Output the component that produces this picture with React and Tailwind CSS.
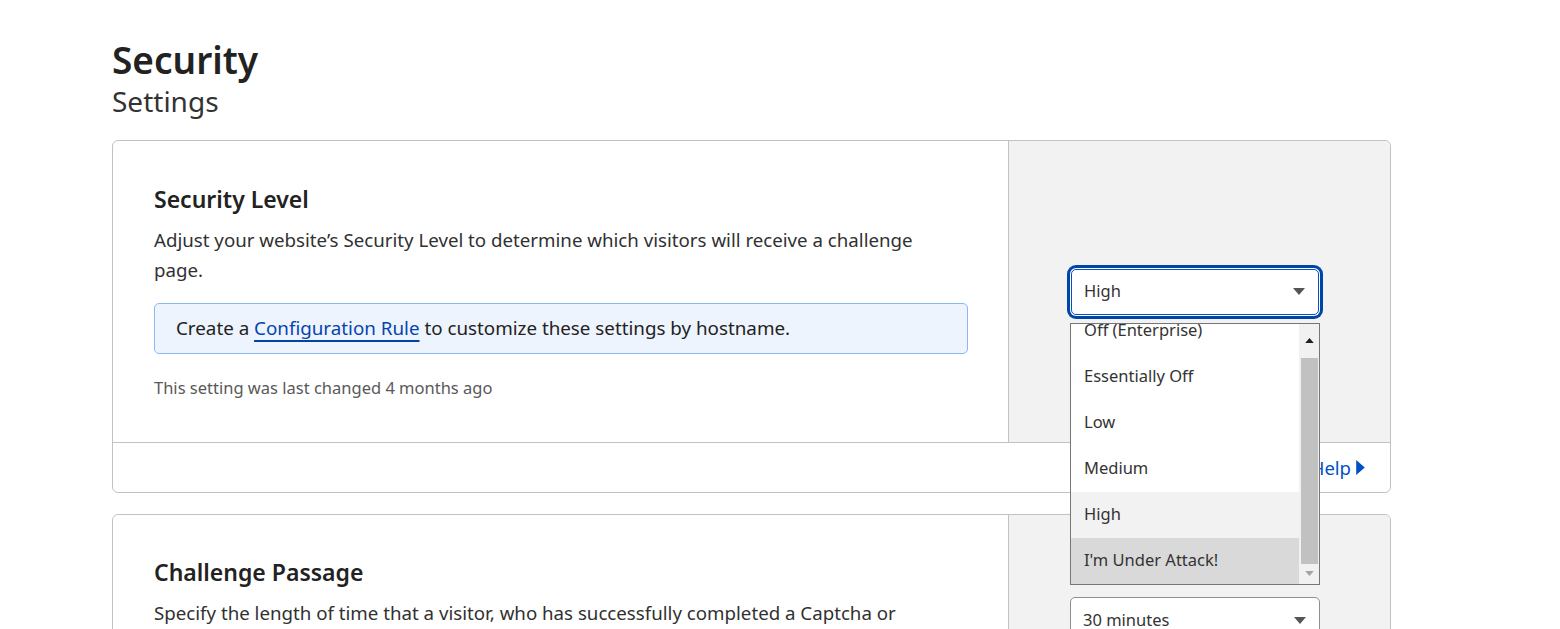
import React from 'react';

const levels = ['Off (Enterprise)', 'Essentially Off', 'Low', 'Medium', 'High', "I'm Under Attack!"];

function Caret({ className = '' }) {
  return (
    <svg viewBox="0 0 12 7" className={className} aria-hidden="true">
      <path d="M0 0h12L6 7z" fill="currentColor" />
    </svg>
  );
}

function LevelMenu() {
  return (
    <div className="absolute left-[-1px] top-[54px] z-10 flex h-[262px] w-[250px] overflow-hidden border border-[#767676] bg-white">
      <ul className="flex-1 -mt-[16px]">
        {levels.map((level) => (
          <li
            key={level}
            className={
              'flex h-[46px] items-center pl-[13px] text-[16.5px] text-[#333] ' +
              (level === 'High' ? 'bg-[#f2f2f2] ' : '') +
              (level === "I'm Under Attack!" ? 'bg-[#d9d9d9]' : '')
            }
          >
            {level}
          </li>
        ))}
      </ul>
      {/* scrollbar */}
      <div className="flex w-[20px] flex-col items-center bg-[#f1f1f1]">
        <div className="flex h-[34px] items-center justify-center text-[#202020]">
          <Caret className="h-[5px] w-[9px] rotate-180" />
        </div>
        <div className="h-[206px] w-[17px] bg-[#c1c1c1]" />
        <div className="flex flex-1 items-center justify-center text-[#a3a3a3]">
          <Caret className="h-[5px] w-[9px]" />
        </div>
      </div>
    </div>
  );
}

function Select({ value, focused, className = 'w-[248px]', children }) {
  return (
    <div className={'relative ' + className}>
      <div
        className={
          'flex h-[46px] items-center justify-between rounded-[5px] border bg-white pl-[12px] pr-[13px] text-[16.5px] text-[#333] ' +
          (focused
            ? 'border-[#0051c3] shadow-[0_0_0_1px_#ffffff,0_0_0_4px_#0045a6]'
            : 'border-[#8f8f8f]')
        }
      >
        <span>{value}</span>
        <Caret className="h-[7px] w-[12px] text-[#555]" />
      </div>
      {children}
    </div>
  );
}

export default function App() {
  return (
    <div
      className="min-h-screen bg-white px-[112px] pt-[38px] text-[#313131]"
      style={{ fontFamily: '"Noto Sans", "Open Sans", sans-serif' }}
    >
      <h1 className="text-[37px] font-semibold leading-[44px] text-[#222]">Security</h1>
      <p className="text-[28px] leading-[38px] text-[#333]">Settings</p>

      <section className="mt-[20px] w-[1279px] rounded-[6px] border border-[#c2c2c2]">
        <div className="flex">
          <div className="w-[895px] px-[41px] pt-[42px] pb-[42px]">
            <h2 className="text-[23px] font-semibold leading-[32px] text-[#222]">Security Level</h2>
            <p className="mt-[10px] w-[790px] text-[18.7px] leading-[30px]">
              Adjust your website’s Security Level to determine which visitors will receive a challenge page.
            </p>
            <div className="mt-[18px] flex h-[51px] w-[814px] items-center rounded-[5px] border border-[#8cb8f6] bg-[#edf4fe] px-[21px] text-[18.8px] text-[#222]">
              <span>
                Create a{' '}
                <a href="#" className="text-[#0645ad] underline decoration-[#0045a6] decoration-2 underline-offset-[5px]">
                  Configuration Rule
                </a>{' '}
                to customize these settings by hostname.
              </span>
            </div>
            <p className="mt-[22px] text-[16.5px] leading-[24px] text-[#595959]">
              This setting was last changed 4 months ago
            </p>
          </div>
          <div className="flex flex-1 items-center rounded-tr-[6px] border-l border-[#c2c2c2] bg-[#f2f2f2] pl-[62px]">
            <Select value="High" focused>
              <LevelMenu />
            </Select>
          </div>
        </div>
        <div className="flex h-[50px] items-center justify-end border-t border-[#c2c2c2] pr-[25px]">
          <a href="#" className="flex items-center gap-[5px] text-[18.5px] text-[#0051c3]">
            Help
            <svg viewBox="0 0 8 14" className="h-[15px] w-[9px]" aria-hidden="true">
              <path d="M0 0l8 7-8 7z" fill="currentColor" />
            </svg>
          </a>
        </div>
      </section>

      <section className="mt-[21px] w-[1279px] rounded-[6px] border border-[#c2c2c2]">
        <div className="flex">
          <div className="w-[895px] px-[41px] pt-[41px] pb-[42px]">
            <h2 className="text-[23px] font-semibold leading-[32px] text-[#222]">Challenge Passage</h2>
            <p className="mt-[10px] w-[790px] text-[18.7px] leading-[30px]">
              Specify the length of time that a visitor, who has successfully completed a Captcha or JavaScript Challenge, can access your website.
            </p>
          </div>
          <div className="flex flex-1 items-start rounded-tr-[6px] border-l border-[#c2c2c2] bg-[#f2f2f2] pl-[61px] pt-[82px]">
            <Select value="30 minutes" className="w-[250px]" />
          </div>
        </div>
      </section>
    </div>
  );
}
